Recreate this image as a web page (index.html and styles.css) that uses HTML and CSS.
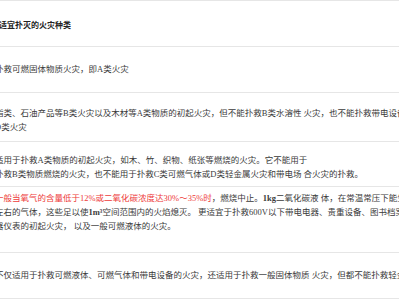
FILE: index.html
```html
<!DOCTYPE html>
<html lang="zh-CN">
<head>
    <meta charset="UTF-8">
    <meta name="viewport" content="width=device-width, initial-scale=1.0">
    <title>灭火器适用范围</title>
    <link rel="stylesheet" href="styles.css">
</head>
<body>
    <div class="fire_table">
        <div class="row head">适宜扑灭的火灾种类</div>
        <div class="row r1">扑救可燃固体物质火灾，即A类火灾</div>
        <div class="row r2">脂类、石油产品等B类火灾以及木材等A类物质的初起火灾，但不能扑救B类水溶性 火灾，也不能扑救带电设备及C类和<br>D类火灾</div>
        <div class="row r3">适用于扑救A类物质的初起火灾，如木、竹、织物、纸张等燃烧的火灾。它不能用于<br>扑救B类物质燃烧的火灾，也不能用于扑救C类可燃气体或D类轻金属火灾和带电场 合火灾的扑救。</div>
        <div class="row r4"><span class="red">一般当氧气的含量低于12%或二氧化碳浓度达30%～35%时</span>，燃烧中止。<b>1kg</b>二氧化碳液 体，在常温常压下能生成500L<br>左右的气体，这些足以使<b>1m³</b>空间范围内的火焰熄灭。 更适宜于扑救600V以下带电电器、贵重设备、图书档案、精密仪<br>器仪表的初起火灾， 以及一般可燃液体的火灾。</div>
        <div class="row r5">不仅适用于扑救可燃液体、可燃气体和带电设备的火灾，还适用于扑救一般固体物质 火灾，但都不能扑救轻金属火灾。</div>
    </div>
</body>
</html>
```

FILE: styles.css
```css
* { margin: 0; padding: 0;}
html, body { background: #ffffff; overflow: hidden;}
body { width: 399px; height: 300px;}
/* 表格只露出中间一列，左右两边被裁掉 */
.fire_table { width: 700px; margin-left: -5px; border-top: 1px solid #e6e6e6; font-family: "Liberation Serif", "Noto Sans CJK SC", serif; font-size: 8.5px; line-height: 14px; color: #3a3a3a;}
.row { border-bottom: 1px solid #e6e6e6; white-space: nowrap;}
.head { padding: 18px 0 13px 4px; font-weight: bold; color: #222222; font-size: 8px;}
.r1 { padding: 15px 0 16px;}
.r2 { padding: 13px 0 7px;}
.r3 { padding: 11px 0 5px;}
.r4 { padding: 4px 0 19px;}
.r5 { padding: 15px 0 16px;}
.red { color: #ee3b3b;}
b { font-weight: bold;}
```
